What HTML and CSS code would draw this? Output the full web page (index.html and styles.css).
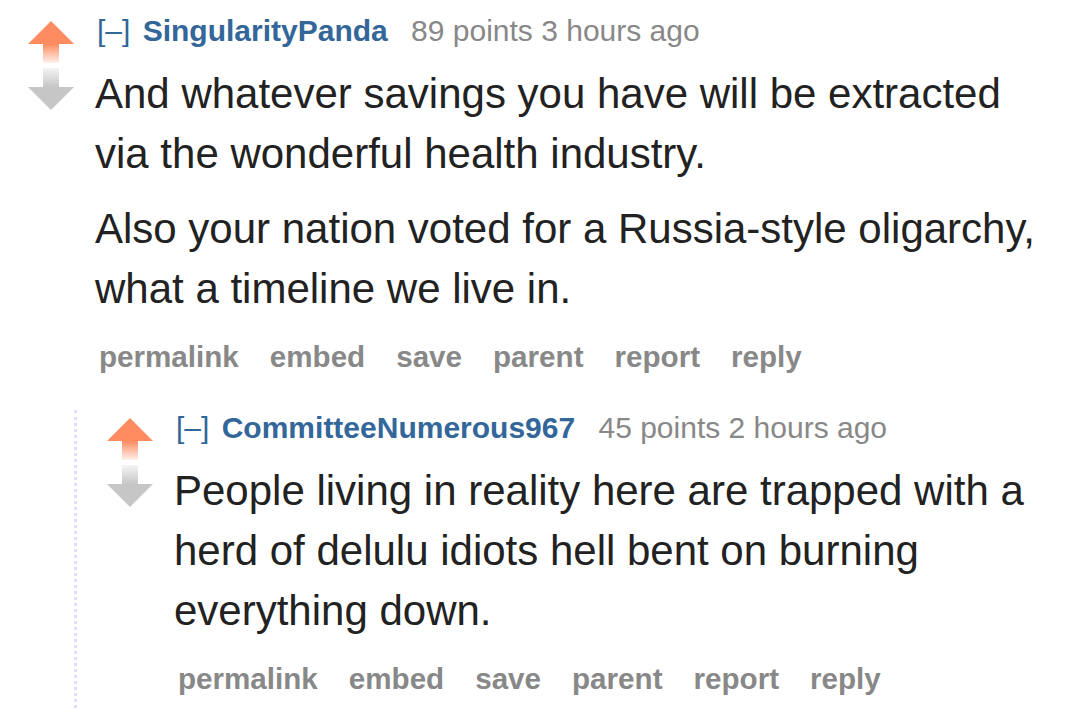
FILE: index.html
```html
<!DOCTYPE html>
<html lang="en">
<head>
    <meta charset="UTF-8">
    <meta name="viewport" content="width=device-width, initial-scale=1.0">
    <title>Comments</title>
    <link rel="stylesheet" href="styles.css">
</head>
<body>
    <div class="commentarea">
        <div class="comment">
            <div class="row">
                <div class="midcol">
                    <svg class="arrows" width="46" height="90" viewBox="0 0 46 90">
                        <defs>
                            <linearGradient id="up-stem" x1="0" y1="0" x2="0" y2="1">
                                <stop offset="0" stop-color="#ff8b60"/>
                                <stop offset="1" stop-color="#fff1ec"/>
                            </linearGradient>
                            <linearGradient id="down-stem" x1="0" y1="0" x2="0" y2="1">
                                <stop offset="0" stop-color="#f4f4f4"/>
                                <stop offset="1" stop-color="#c6c6c6"/>
                            </linearGradient>
                        </defs>
                        <polygon points="23,0 46,23 0,23" fill="#ff8b60"/>
                        <rect x="15" y="23" width="16" height="19" fill="url(#up-stem)"/>
                        <rect x="15" y="47" width="16" height="19" fill="url(#down-stem)"/>
                        <polygon points="0,66 46,66 23,89" fill="#c6c6c6"/>
                    </svg>
                </div>
                <div class="entry">
                    <p class="tagline">
                        <a class="expand" href="#">[–]</a>
                        <a class="author" href="#">SingularityPanda</a>
                        <span class="score">89 points 3 hours ago</span>
                    </p>
                    <div class="md">
                        <p>And whatever savings you have will be extracted via the wonderful health industry.</p>
                        <p>Also your nation voted for a Russia-style oligarchy, what a timeline we live in.</p>
                    </div>
                    <ul class="buttons">
                        <li><a href="#">permalink</a></li>
                        <li><a href="#">embed</a></li>
                        <li><a href="#">save</a></li>
                        <li><a href="#">parent</a></li>
                        <li><a href="#">report</a></li>
                        <li><a href="#">reply</a></li>
                    </ul>
                </div>
            </div>

            <div class="child">
                <div class="comment">
                    <div class="row">
                        <div class="midcol">
                            <svg class="arrows" width="46" height="90" viewBox="0 0 46 90">
                                <polygon points="23,0 46,23 0,23" fill="#ff8b60"/>
                                <rect x="15" y="23" width="16" height="19" fill="url(#up-stem)"/>
                                <rect x="15" y="47" width="16" height="19" fill="url(#down-stem)"/>
                                <polygon points="0,66 46,66 23,89" fill="#c6c6c6"/>
                            </svg>
                        </div>
                        <div class="entry">
                            <p class="tagline">
                                <a class="expand" href="#">[–]</a>
                                <a class="author" href="#">CommitteeNumerous967</a>
                                <span class="score">45 points 2 hours ago</span>
                            </p>
                            <div class="md">
                                <p>People living in reality here are trapped with a herd of delulu idiots hell bent on burning everything down.</p>
                            </div>
                            <ul class="buttons">
                                <li><a href="#">permalink</a></li>
                                <li><a href="#">embed</a></li>
                                <li><a href="#">save</a></li>
                                <li><a href="#">parent</a></li>
                                <li><a href="#">report</a></li>
                                <li><a href="#">reply</a></li>
                            </ul>
                        </div>
                    </div>
                </div>
            </div>
        </div>
    </div>
</body>
</html>
```

FILE: styles.css
```css
body {
    margin: 0;
    padding: 0;
    font-family: "Liberation Sans", Arial, sans-serif;
    background: #ffffff;
    color: #222;
    overflow: hidden;
}

a {
    text-decoration: none;
}

.commentarea {
    padding: 13px 0 0 28px;
}

.row {
    display: flex;
}

.midcol {
    width: 46px;
    flex-shrink: 0;
    margin-right: 23px;
    padding-top: 8px;
}

.arrows {
    display: block;
}

.entry {
    flex: 1;
    min-width: 0;
}

.tagline {
    margin: 0;
    font-size: 30px;
    line-height: 36px;
    color: #888;
}

.tagline .expand {
    color: #369;
    font-weight: normal;
    margin-right: 4px;
}

.tagline .author {
    color: #369;
    font-weight: bold;
    margin-right: 15px;
}

.md {
    margin: 15px 0 0 -2px;
    font-size: 42px;
    line-height: 60px;
    color: #222;
    max-width: 950px;
}

.md p {
    margin: 0 0 15px;
}

/* the last paragraph's margin collapses into this one */
.buttons {
    list-style: none;
    margin: 20px 0 0;
    padding: 0 0 0 2px;
    display: flex;
    gap: 31px;
    font-size: 29.6px;
    line-height: 36px;
}

.buttons a {
    color: #888;
    font-weight: bold;
}

.child {
    margin: 35px 0 0 46px;
    padding-left: 30px;
    border-left: 3px dotted #ddf;
    padding-bottom: 60px;
}
```
